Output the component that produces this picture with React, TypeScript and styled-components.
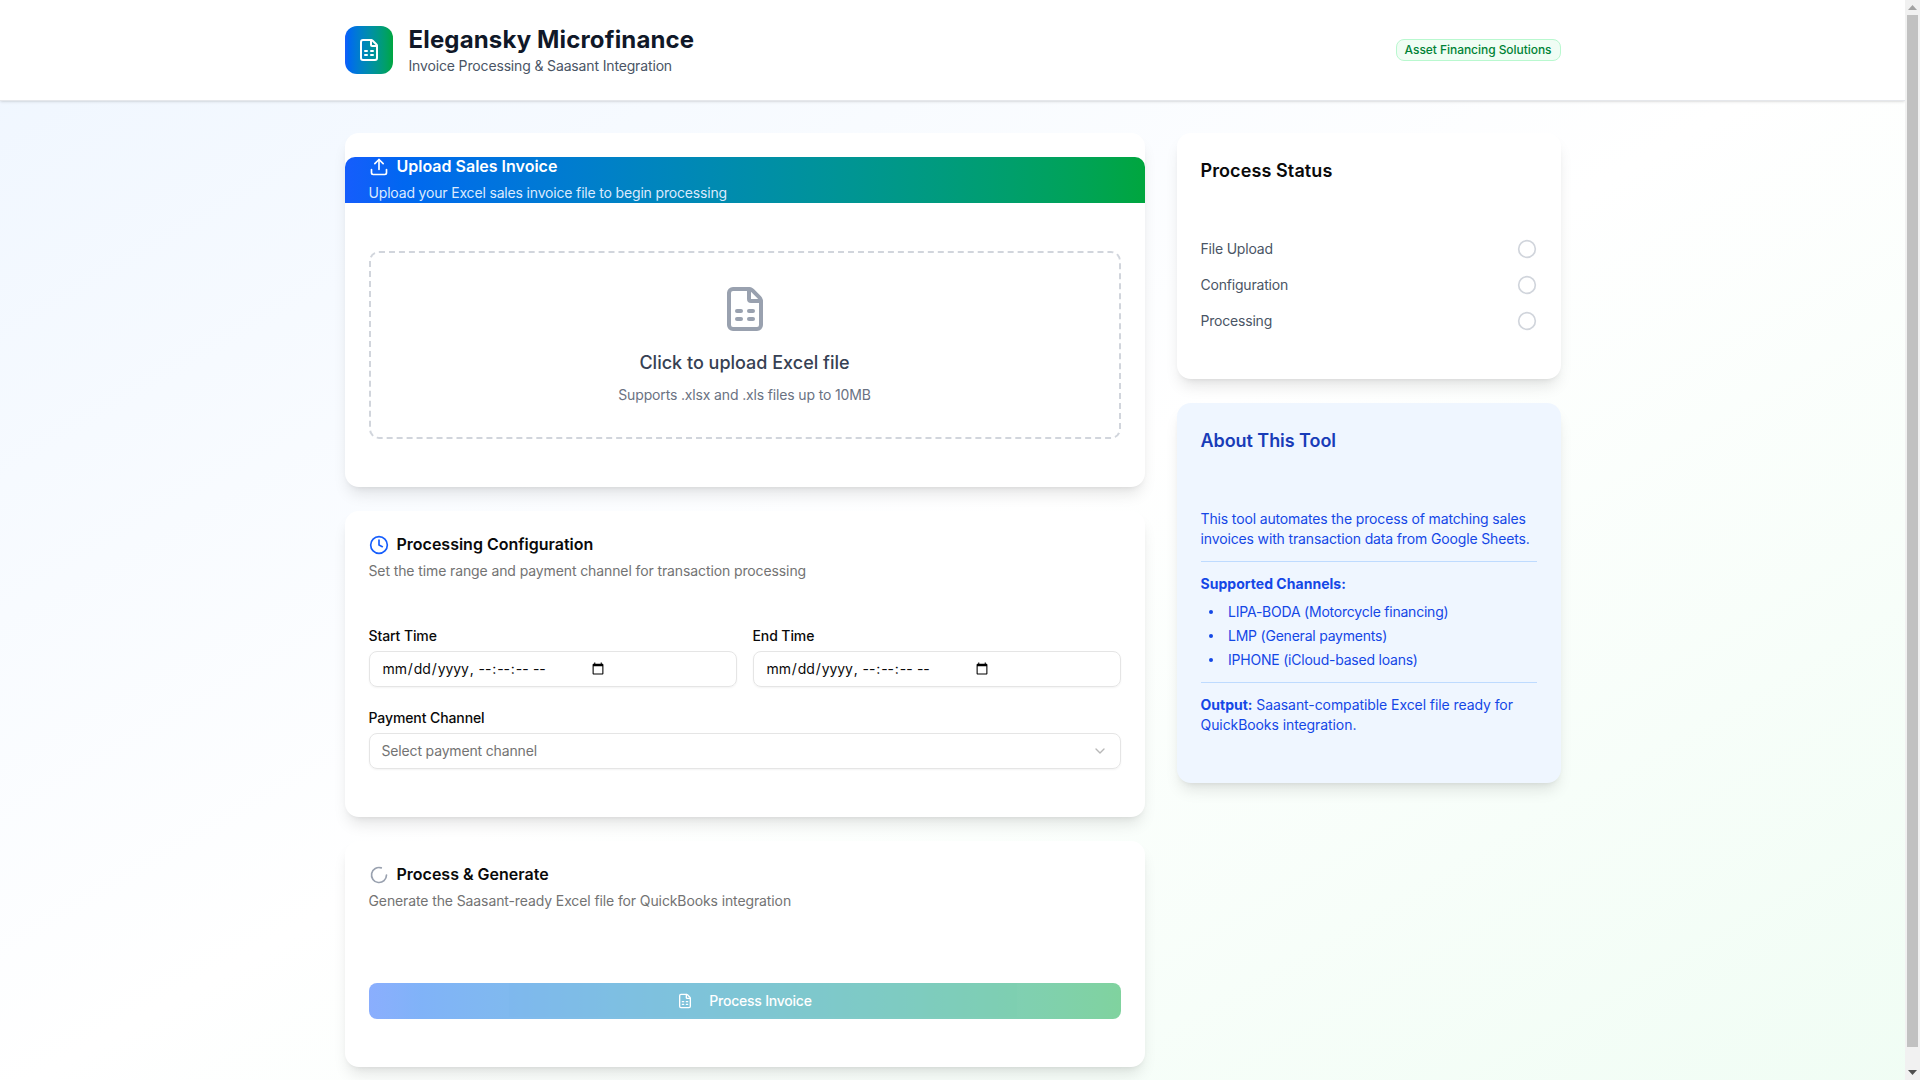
import React from 'react';
import styled, { createGlobalStyle } from 'styled-components';
import { ChevronDown, Circle, Clock, FileSpreadsheet, LoaderCircle, Upload } from 'lucide-react';

const brandGradient = 'linear-gradient(to right in oklab, #155dfc, #00a63e)';

const GlobalStyle = createGlobalStyle`
  * {
    box-sizing: border-box;
  }
  html, body {
    margin: 0;
    padding: 0;
  }
  body {
    font-family: Inter, "Liberation Sans", sans-serif;
    color: #0a0a0a;
    line-height: 1.5;
  }
`;

// room for the window scrollbar on the right, which headless mode does not draw
const Page = styled.div`
  min-height: 100vh;
  padding-right: 15px;
  background: linear-gradient(to bottom right in oklab, #eff6ff, #ffffff, #f0fdf4);
`;

const ScrollTrack = styled.div`
  position: fixed;
  top: 0;
  right: 0;
  bottom: 0;
  width: 15px;
  padding: 0 2px;
  display: flex;
  flex-direction: column;
  background: #f1f1f1;
`;

const ScrollArrow = styled.div`
  height: 15px;
  flex: none;
  display: flex;
  align-items: center;
  justify-content: center;
`;

const ScrollThumb = styled.div`
  height: 1032px;
  background: #c1c1c1;
`;

const ScrollGap = styled.div`
  flex: 1;
`;

const Header = styled.header`
  background: #fff;
  border-bottom: 1px solid #e5e7eb;
  box-shadow: 0 1px 3px 0 rgba(0, 0, 0, 0.1), 0 1px 2px -1px rgba(0, 0, 0, 0.1);
`;

const HeaderInner = styled.div`
  max-width: 1280px;
  margin: 0 auto;
  padding: 24px 32px;
  display: flex;
  align-items: center;
  justify-content: space-between;
`;

const Brand = styled.div`
  display: flex;
  align-items: center;
  gap: 16px;
`;

const Logo = styled.div`
  width: 48px;
  height: 48px;
  border-radius: 12px;
  background: ${brandGradient};
  color: #fff;
  display: flex;
  align-items: center;
  justify-content: center;
`;

const BrandName = styled.h1`
  margin: 0;
  font-size: 24px;
  line-height: 32px;
  font-weight: 700;
  letter-spacing: 0.15px;
  color: #101828;
`;

const BrandTagline = styled.p`
  margin: 0;
  font-size: 14px;
  line-height: 20px;
  letter-spacing: -0.15px;
  color: #4a5565;
`;

const Badge = styled.span`
  display: inline-flex;
  align-items: center;
  height: 22px;
  padding: 0 8px;
  font-size: 12px;
  line-height: 16px;
  font-weight: 500;
  letter-spacing: -0.05px;
  color: #008236;
  background: #f0fdf4;
  border: 1px solid #b9f8cf;
  border-radius: 8px;
`;

const Main = styled.main`
  max-width: 1280px;
  margin: 0 auto;
  padding: 32px;
  display: grid;
  grid-template-columns: 800px 384px;
  gap: 32px;
`;

const Column = styled.div`
  display: flex;
  flex-direction: column;
  gap: 24px;
`;

const Card = styled.section<{ $tint?: boolean }>`
  background: ${({ $tint }) => ($tint ? '#eff6ff' : '#fff')};
  border-radius: 14px;
  padding: 24px 0;
  box-shadow: 0 10px 15px -3px rgba(0, 0, 0, 0.1), 0 4px 6px -4px rgba(0, 0, 0, 0.1);
`;

const CardHeader = styled.div<{ $gradient?: boolean }>`
  display: flex;
  flex-direction: column;
  gap: 6px;
  padding: 0 24px;
  color: ${({ $gradient }) => ($gradient ? '#fff' : 'inherit')};
  background: ${({ $gradient }) => ($gradient ? brandGradient : 'none')};
  border-radius: ${({ $gradient }) => ($gradient ? '10px 10px 0 0' : '0')};
`;

const CardTitle = styled.div`
  display: flex;
  align-items: center;
  gap: 8px;
  height: 20px;
  font-size: 16px;
  line-height: 18px;
  font-weight: 600;
  span {
    margin-bottom: 2px;
  }
`;

const SideTitle = styled.h3<{ $color?: string }>`
  margin: 0 0 6px;
  font-size: 18px;
  line-height: 28px;
  font-weight: 600;
  letter-spacing: ${({ $color }) => ($color ? '-0.06px' : '0.1px')};
  color: ${({ $color }) => $color || '#0a0a0a'};
`;

const CardDesc = styled.p<{ $light?: boolean }>`
  margin: 0;
  font-size: 14px;
  line-height: 20px;
  letter-spacing: ${({ $light }) => ($light ? '-0.17px' : '-0.11px')};
  color: ${({ $light }) => ($light ? '#dbeafe' : '#737373')};
`;

const CardBody = styled.div`
  padding: 48px 24px 24px;
`;

const SideHead = styled.div`
  padding: 0 24px;
`;

const DropZone = styled.div`
  border: 2px dashed #d1d5dc;
  border-radius: 10px;
  padding: 32px;
  text-align: center;
  cursor: pointer;
`;

const DropIcon = styled(FileSpreadsheet)`
  display: block;
  margin: 0 auto 16px;
  color: #99a1af;
`;

const DropTitle = styled.p`
  margin: 0 0 8px;
  font-size: 18px;
  line-height: 28px;
  font-weight: 500;
  color: #364153;
`;

const DropHint = styled.p`
  margin: 0;
  font-size: 14px;
  line-height: 20px;
  letter-spacing: -0.15px;
  color: #6a7282;
`;

const TwoCols = styled.div`
  display: grid;
  grid-template-columns: 1fr 1fr;
  gap: 16px;
  margin-bottom: 24px;
`;

const Field = styled.div`
  display: flex;
  flex-direction: column;
  gap: 8px;
`;

const Label = styled.label`
  font-size: 14px;
  line-height: 14px;
  font-weight: 500;
  letter-spacing: -0.1px;
`;

const DateInput = styled.input`
  display: flex;
  height: 36px;
  width: 100%;
  padding: 3px 12px 5px;
  font-family: inherit;
  font-size: 14px;
  letter-spacing: -0.1px;
  color: #0a0a0a;
  background: transparent;
  border: 1px solid #e5e5e5;
  border-radius: 8px;
  box-shadow: 0 1px 2px 0 rgba(0, 0, 0, 0.05);
  outline: none;
  &::-webkit-calendar-picker-indicator {
    margin-left: 4.7px;
    margin-top: 2px;
  }
`;

const SelectBox = styled.button`
  height: 36px;
  width: 100%;
  padding: 0 12px 2px;
  display: flex;
  align-items: center;
  justify-content: space-between;
  font-family: inherit;
  font-size: 14px;
  letter-spacing: -0.16px;
  color: #737373;
  background: transparent;
  border: 1px solid #e5e5e5;
  border-radius: 8px;
  box-shadow: 0 1px 2px 0 rgba(0, 0, 0, 0.05);
  svg {
    opacity: 0.5;
    margin-bottom: -2px;
  }
`;

const ProcessBody = styled.div`
  padding: 72px 24px 24px;
`;

const ProcessButton = styled.button`
  width: 100%;
  height: 36px;
  padding: 0 0 2px;
  display: flex;
  align-items: center;
  justify-content: center;
  gap: 16px;
  font-family: inherit;
  font-size: 14px;
  font-weight: 500;
  letter-spacing: -0.22px;
  color: #fff;
  background: ${brandGradient};
  border: none;
  border-radius: 8px;
  opacity: 0.5;
  svg {
    margin-bottom: -2px;
  }
`;

const StatusList = styled.div`
  display: flex;
  flex-direction: column;
  gap: 16px;
`;

const StatusRow = styled.div`
  display: flex;
  align-items: center;
  justify-content: space-between;
  height: 20px;
  font-size: 14px;
  line-height: 20px;
  letter-spacing: -0.2px;
  color: #4a5565;
  svg {
    color: #d1d5dc;
  }
`;

const AboutBody = styled.div`
  padding: 48px 24px 24px;
  font-size: 14px;
  line-height: 20px;
  letter-spacing: -0.14px;
  color: #1447e6;
  p {
    margin: 0;
  }
`;

const AboutSection = styled.div`
  margin-top: 12px;
  padding-top: 12px;
  border-top: 1px solid #bedbff;
`;

const ChannelTitle = styled.p`
  font-weight: 700;
  letter-spacing: 0.03px;
  && {
    margin-bottom: 8px;
  }
`;

const ChannelList = styled.ul`
  margin: 0;
  padding: 0 0 0 27.5px;
  list-style: none;
  display: flex;
  flex-direction: column;
  gap: 4px;
`;

const ChannelItem = styled.li`
  position: relative;
  letter-spacing: -0.22px;
  &::before {
    content: '';
    position: absolute;
    left: -19.5px;
    top: 8px;
    width: 4px;
    height: 4px;
    border-radius: 50%;
    background: currentColor;
  }
`;

const OutputNote = styled.p`
  letter-spacing: -0.08px;
  strong {
    letter-spacing: 0;
  }
`;

const statusSteps = ['File Upload', 'Configuration', 'Processing'];
const channels = ['LIPA-BODA (Motorcycle financing)', 'LMP (General payments)', 'IPHONE (iCloud-based loans)'];

const App: React.FC = () => {
  return (
    <Page>
      <GlobalStyle />
      <Header>
        <HeaderInner>
          <Brand>
            <Logo>
              <FileSpreadsheet size={24} />
            </Logo>
            <div>
              <BrandName>Elegansky Microfinance</BrandName>
              <BrandTagline>Invoice Processing &amp; Saasant Integration</BrandTagline>
            </div>
          </Brand>
          <Badge>Asset Financing Solutions</Badge>
        </HeaderInner>
      </Header>

      <Main>
        <Column>
          <Card>
            <CardHeader $gradient>
              <CardTitle>
                <Upload size={20} />
                <span>Upload Sales Invoice</span>
              </CardTitle>
              <CardDesc $light>Upload your Excel sales invoice file to begin processing</CardDesc>
            </CardHeader>
            <CardBody>
              <DropZone>
                <DropIcon size={48} />
                <DropTitle>Click to upload Excel file</DropTitle>
                <DropHint>Supports .xlsx and .xls files up to 10MB</DropHint>
              </DropZone>
            </CardBody>
          </Card>

          <Card>
            <CardHeader>
              <CardTitle>
                <Clock size={20} color="#155dfc" />
                <span>Processing Configuration</span>
              </CardTitle>
              <CardDesc>Set the time range and payment channel for transaction processing</CardDesc>
            </CardHeader>
            <CardBody>
              <TwoCols>
                <Field>
                  <Label htmlFor="start-time">Start Time</Label>
                  <DateInput id="start-time" type="datetime-local" step="1" />
                </Field>
                <Field>
                  <Label htmlFor="end-time">End Time</Label>
                  <DateInput id="end-time" type="datetime-local" step="1" />
                </Field>
              </TwoCols>
              <Field>
                <Label>Payment Channel</Label>
                <SelectBox type="button">
                  Select payment channel
                  <ChevronDown size={16} />
                </SelectBox>
              </Field>
            </CardBody>
          </Card>

          <Card>
            <CardHeader>
              <CardTitle>
                <LoaderCircle size={20} color="#99a1af" />
                <span>Process &amp; Generate</span>
              </CardTitle>
              <CardDesc>Generate the Saasant-ready Excel file for QuickBooks integration</CardDesc>
            </CardHeader>
            <ProcessBody>
              <ProcessButton type="button">
                <FileSpreadsheet size={16} />
                Process Invoice
              </ProcessButton>
            </ProcessBody>
          </Card>
        </Column>

        <Column>
          <Card>
            <SideHead>
              <SideTitle>Process Status</SideTitle>
            </SideHead>
            <CardBody>
              <StatusList>
                {statusSteps.map((step) => (
                  <StatusRow key={step}>
                    {step}
                    <Circle size={20} />
                  </StatusRow>
                ))}
              </StatusList>
            </CardBody>
          </Card>

          <Card $tint>
            <SideHead>
              <SideTitle $color="#193cb8">About This Tool</SideTitle>
            </SideHead>
            <AboutBody>
              <p>This tool automates the process of matching sales invoices with transaction data from Google Sheets.</p>
              <AboutSection>
                <ChannelTitle>Supported Channels:</ChannelTitle>
                <ChannelList>
                  {channels.map((channel) => (
                    <ChannelItem key={channel}>{channel}</ChannelItem>
                  ))}
                </ChannelList>
              </AboutSection>
              <AboutSection>
                <OutputNote>
                  <strong>Output:</strong> Saasant-compatible Excel file ready for QuickBooks integration.
                </OutputNote>
              </AboutSection>
            </AboutBody>
          </Card>
        </Column>
      </Main>

      <ScrollTrack aria-hidden="true">
        <ScrollArrow>
          <svg width="9" height="5" viewBox="0 0 9 5">
            <path d="M4.5 0 9 5H0z" fill="#a3a3a3" />
          </svg>
        </ScrollArrow>
        <ScrollThumb />
        <ScrollGap />
        <ScrollArrow>
          <svg width="9" height="5" viewBox="0 0 9 5">
            <path d="M0 0h9L4.5 5z" fill="#505050" />
          </svg>
        </ScrollArrow>
      </ScrollTrack>
    </Page>
  );
};

export default App;
